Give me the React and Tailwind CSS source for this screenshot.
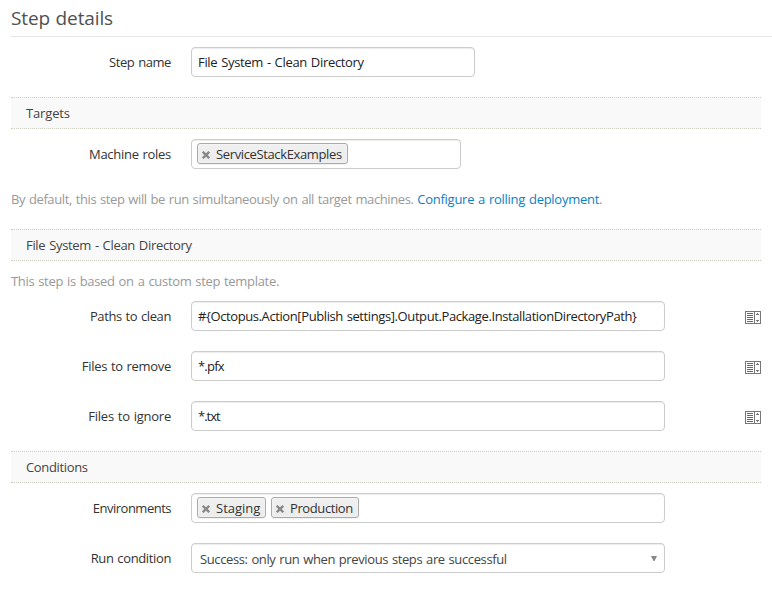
import React from "react";

const box = "h-[30px] rounded-[4px] border border-[#ccc] bg-white shadow-[inset_0_1px_1px_rgba(0,0,0,0.075)]";

function Section({ children, ls = "", className = "" }) {
  return (
    <h2 className={`flex h-8 w-[750px] items-center border-y border-dotted border-[#ccccc0] bg-[#f9f9f9] pl-[15px] text-[#444] ${className}`}>
      <span className={ls}>{children}</span>
    </h2>
  );
}

function Row({ label, ls = "", children, className = "" }) {
  return (
    <div className={`flex h-[30px] w-[750px] items-center ${className}`}>
      <label className="mr-5 flex w-[160px] shrink-0 justify-end text-[#333]">
        <span className={ls}>{label}</span>
      </label>
      {children}
    </div>
  );
}

function TextBox({ value, width, ls = "" }) {
  return (
    <div className={`${box} ${width} flex items-center pl-[6px] text-[#222]`}>
      <span className={ls}>{value}</span>
    </div>
  );
}

function Tag({ children, width, ls = "" }) {
  return (
    <span className={`${width} flex h-[21px] items-center rounded-[3px] border border-[#aaa] bg-linear-to-b from-[#f0f0f0] to-[#ececec] pl-[4px] text-[#333] shadow-[inset_0_0_2px_#fff,0_1px_0_rgba(0,0,0,0.05)]`}>
      <svg width="8" height="8" viewBox="0 0 8 8" className="mt-[2px] mr-[6px] shrink-0" stroke="#888" strokeWidth="2.3">
        <path d="M0.8 0.8 7.2 7.2M7.2 0.8 0.8 7.2" />
      </svg>
      <span className={ls}>{children}</span>
    </span>
  );
}

function BindIcon() {
  return (
    <svg width="16" height="13" viewBox="0 0 16 13" className="mt-[2px] ml-auto" shapeRendering="crispEdges">
      <path fill="#777" d="M0 0h16v13H0zM1 1v11h8V1zM10 1v11h5V1z" fillRule="evenodd" />
      <path fill="#3572b0" d="M2 2h6v1H2zM2 4h6v1H2zM2 6h6v1H2zM2 8h6v1H2zM2 10h6v1H2z" />
      <path fill="#777" d="M12 2h1v1h1v1h-3V3h1zM11 9h3v1h-1v1h-1v-1h-1z" />
    </svg>
  );
}

export default function App() {
  return (
    <main className="h-[592px] w-[772px] overflow-hidden bg-white pl-[11px] font-['Open_Sans','Noto_Sans',sans-serif] text-[13px] leading-5 whitespace-nowrap [word-spacing:0.8px]">
      <h1 className="h-[37px] border-b border-[#e5e5e5] pt-[6px] text-[19px] leading-6 text-[#505050]">
        <span className="tracking-[-0.12px]">Step details</span>
      </h1>
      <Row label="Step name" ls="tracking-[-0.42px]" className="mt-[10px]">
        <TextBox value="File System - Clean Directory" ls="tracking-[-0.32px]" width="w-[284px]" />
      </Row>

      <Section className="mt-5" ls="tracking-[-0.14px]">Targets</Section>
      <Row label="Machine roles" ls="tracking-[-0.29px]" className="mt-[10px]">
        <div className={`${box} flex w-[270px] items-start pt-[3px] pl-[5px]`}>
          <Tag width="w-[151px]" ls="tracking-[-0.37px]">ServiceStackExamples</Tag>
        </div>
      </Row>
      <p className="mt-5 text-[#999]">
        <span className="tracking-[-0.39px]">By default, this step will be run simultaneously on all target machines. </span>
        <span className="tracking-[-0.27px]">
          <a className="text-[#0a7fc4]">Configure a rolling deployment</a>.
        </span>
      </p>

      <Section className="mt-5" ls="tracking-[-0.32px]">File System - Clean Directory</Section>
      <p className="mt-[10px] text-[#999]">
        <span className="tracking-[-0.31px]">This step is based on a custom step template.</span>
      </p>
      <Row label="Paths to clean" ls="tracking-[-0.4px]" className="mt-[10px]">
        <TextBox value="#{Octopus.Action[Publish settings].Output.Package.InstallationDirectoryPath}" ls="tracking-[-0.4px]" width="w-[474px]" />
        <BindIcon />
      </Row>
      <Row label="Files to remove" ls="tracking-[-0.31px]" className="mt-5">
        <TextBox value="*.pfx" ls="tracking-[-0.8px]" width="w-[474px]" />
        <BindIcon />
      </Row>
      <Row label="Files to ignore" ls="tracking-[-0.24px]" className="mt-5">
        <TextBox value="*.txt" ls="tracking-[-1px]" width="w-[474px]" />
        <BindIcon />
      </Row>

      <Section className="mt-5" ls="tracking-[-0.34px]">Conditions</Section>
      <Row label="Environments" ls="tracking-[-0.5px]" className="mt-[10px]">
        <div className={`${box} flex w-[474px] items-start gap-[5px] pt-[3px] pl-[5px]`}>
          <Tag width="w-[69px]">Staging</Tag>
          <Tag width="w-[88px]" ls="tracking-[-0.4px]">Production</Tag>
        </div>
      </Row>
      <Row label="Run condition" ls="tracking-[-0.37px]" className="mt-5">
        <div className={`${box} flex w-[474px] items-center justify-between pr-[7px] pl-2 text-[#444]`}>
          <span className="pt-[2px] tracking-[-0.38px]">Success: only run when previous steps are successful</span>
          <svg width="6" height="5" viewBox="0 0 6 5" fill="#888">
            <path d="M0 0h6L3.5 5h-1z" />
          </svg>
        </div>
      </Row>
    </main>
  );
}
